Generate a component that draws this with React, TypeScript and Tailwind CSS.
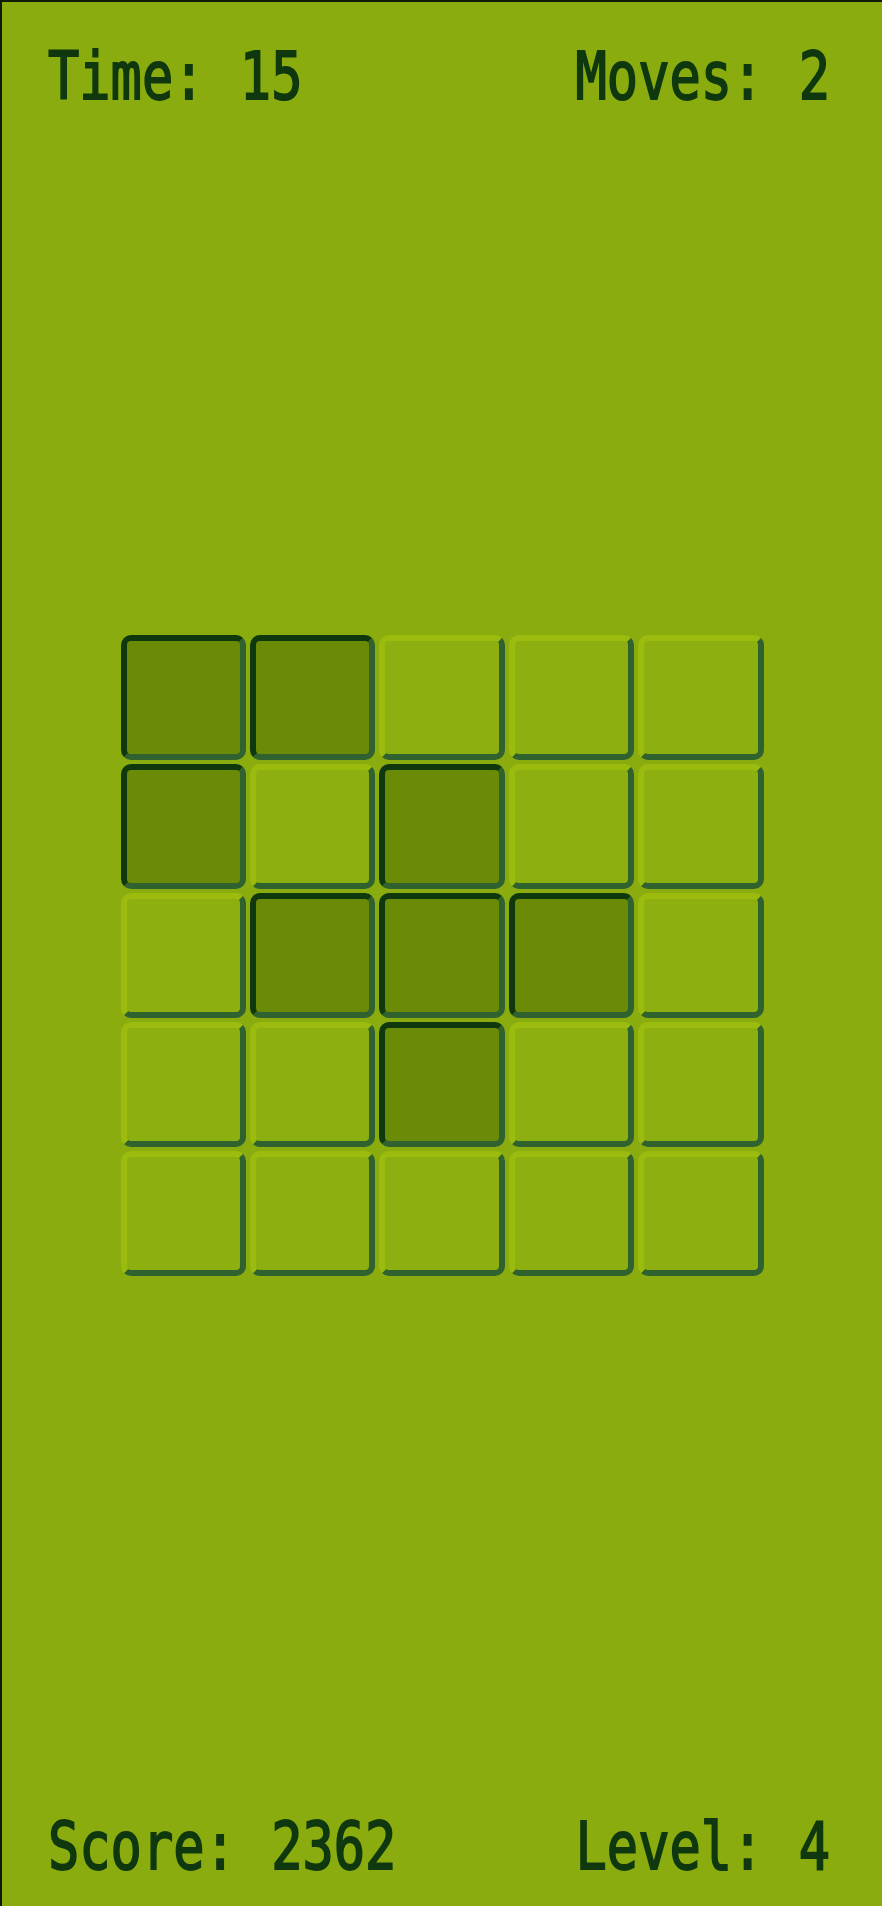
import React from "react";

// 5x5 board, 1 = filled (dark) tile
const board: number[][] = [
  [1, 1, 0, 0, 0],
  [1, 0, 1, 0, 0],
  [0, 1, 1, 1, 0],
  [0, 0, 1, 0, 0],
  [0, 0, 0, 0, 0],
];

const Stat: React.FC<{ label: string; value: number }> = ({ label, value }) => (
  <span
    className="inline-block origin-top scale-y-[1.26] whitespace-pre text-[52px] font-normal leading-none text-[#0f380f] [-webkit-text-stroke:1.5px_#0f380f]"
    style={{ fontFamily: '"DejaVu Sans Mono", "Liberation Mono", monospace' }}
  >
    {label}: <span className="ml-[4px]">{value}</span>
  </span>
);

const Tile: React.FC<{ on: boolean }> = ({ on }) =>
  on ? (
    <div className="h-[125px] rounded-[10px] border-[6px] border-t-[#0f380f] border-l-[#0f380f] border-r-[#306230] border-b-[#306230] bg-[#6b8a05]" />
  ) : (
    <div className="h-[125px] rounded-[10px] border-[6px] border-t-[#9bbc0f] border-l-[#9bbc0f] border-r-[#306230] border-b-[#306230] bg-[#8eaf10]" />
  );

export default function App() {
  return (
    <div className="flex h-[1906px] w-full flex-col border-l-2 border-t-2 border-[#111a05] bg-[#8bac0f]">
      {/* Top stats */}
      <div className="flex justify-between pl-[46px] pr-[52px] pt-[42px]">
        <Stat label="Time" value={15} />
        <Stat label="Moves" value={2} />
      </div>

      {/* Board */}
      <div className="flex flex-1 items-center justify-center">
        <div className="grid w-[643px] grid-cols-5 gap-[4px]">
          {board.flat().map((v, i) => (
            <Tile key={i} on={v === 1} />
          ))}
        </div>
      </div>

      {/* Bottom stats */}
      <div className="flex justify-between pb-[40px] pl-[46px] pr-[52px]">
        <Stat label="Score" value={2362} />
        <Stat label="Level" value={4} />
      </div>
    </div>
  );
}
